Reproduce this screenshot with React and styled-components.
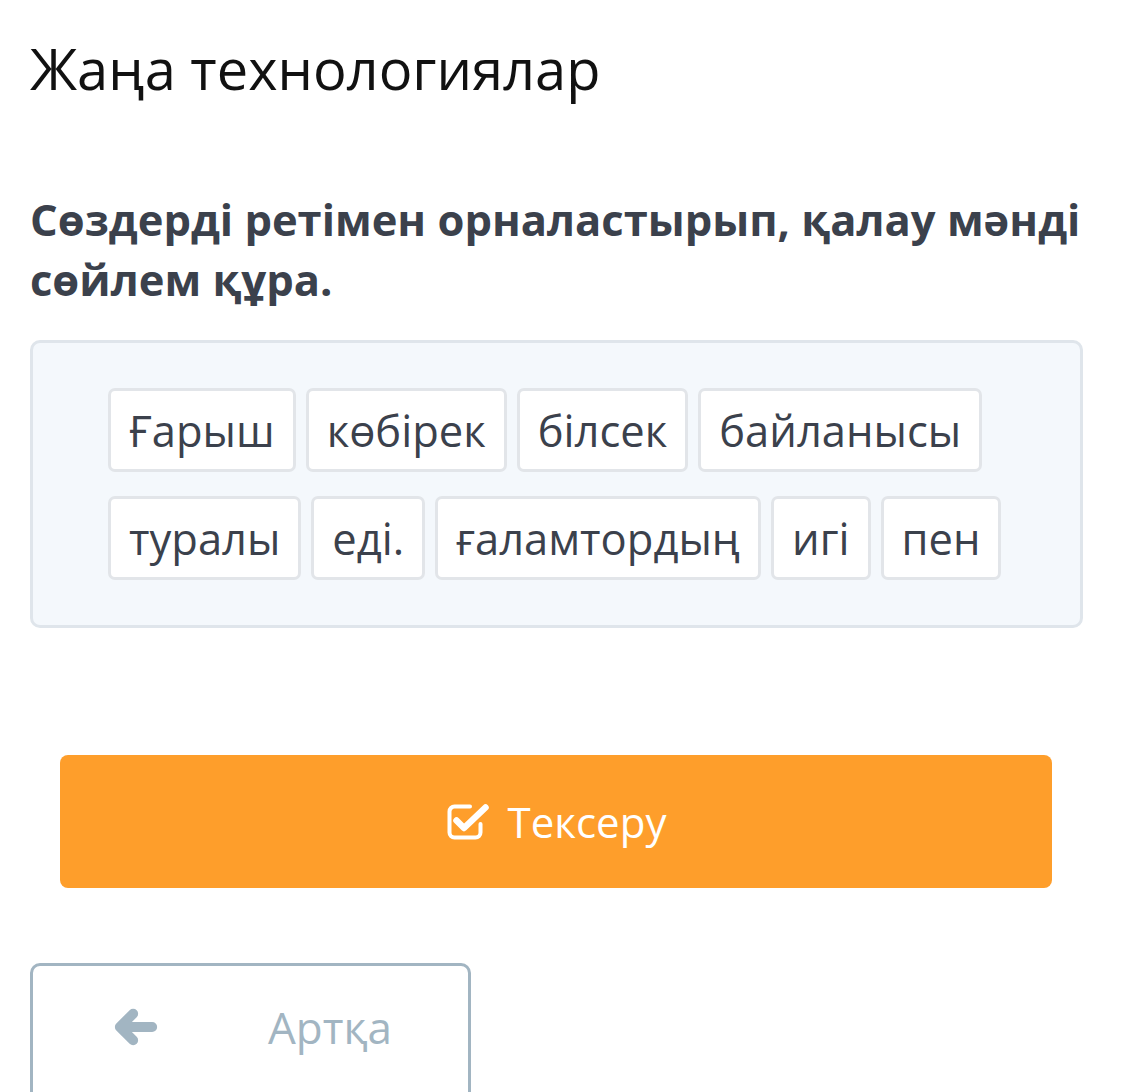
import styled, { createGlobalStyle } from 'styled-components';

const GlobalStyle = createGlobalStyle`
    body {
        margin: 0;
        background: #ffffff;
        font-family: "Open Sans", "Noto Sans", sans-serif;
    }
`;

const Page = styled.main`
    padding: 32px 42px 0 30px;
`;

const Title = styled.h1`
    margin: 0;
    font-size: 56px;
    font-weight: 400;
    line-height: 72px;
    color: #111111;
`;

const Task = styled.h2`
    margin: 86px 0 0;
    font-size: 43.5px;
    font-weight: 700;
    line-height: 60px;
    color: #3b414c;
`;

const Board = styled.section`
    margin-top: 30px;
    height: 288px;
    box-sizing: border-box;
    border: 3px solid #dfe5eb;
    border-radius: 10px;
    background: #f4f8fc;
    display: flex;
    padding: 45px 30px 0 75px;
`;

const Words = styled.div`
    flex: 1;
    display: flex;
    flex-wrap: wrap;
    align-content: flex-start;
    column-gap: 10px;
    row-gap: 24px;
`;

const Word = styled.span`
    box-sizing: border-box;
    height: 84px;
    padding: 0 18px;
    display: inline-flex;
    align-items: center;
    background: #ffffff;
    border: 3px solid #e2e5e9;
    border-radius: 7px;
    font-size: 43.5px;
    color: #3b414c;
`;

const CheckButton = styled.button`
    display: flex;
    align-items: center;
    justify-content: center;
    gap: 18px;
    width: 992px;
    height: 133px;
    margin: 127px 0 0 30px;
    border: none;
    border-radius: 8px;
    background: #fe9e2b;
    color: #ffffff;
    font-family: inherit;
    font-size: 42px;
    cursor: pointer;
`;

const BackButton = styled.button`
    display: flex;
    align-items: center;
    width: 441px;
    height: 140px;
    margin-top: 75px;
    padding: 0 0 12px 81px;
    box-sizing: border-box;
    border: 3px solid #a2b5c2;
    border-radius: 10px;
    background: #ffffff;
    color: #a2b5c2;
    font-family: inherit;
    font-size: 44px;
    cursor: pointer;

    svg {
        margin-right: 110px;
    }
`;

// open box with a check mark breaking out of its top-right corner
const CheckIcon = () => (
    <svg width="44" height="38" viewBox="0 0 44 38" fill="none" stroke="currentColor" strokeLinecap="round" strokeLinejoin="round">
        <path d="M24 3.5H8.5A5 5 0 0 0 3.5 8.5V29.5A5 5 0 0 0 8.5 34.5H29.5A5 5 0 0 0 34.5 29.5V21" strokeWidth="4" />
        <path d="M10.5 17.5L18 25L39.5 4.5" strokeWidth="6.5" />
    </svg>
);

const ArrowIcon = () => (
    <svg width="44" height="38" viewBox="0 0 46 40" fill="none" stroke="currentColor" strokeWidth="10.5" strokeLinecap="round" strokeLinejoin="round">
        <path d="M20 6L6 20L20 34M6 20H40" />
    </svg>
);

const words = [
    'Ғарыш', 'көбірек', 'білсек', 'байланысы',
    'туралы', 'еді.', 'ғаламтордың', 'игі', 'пен',
];

const App = () => {
    return (
        <>
            <GlobalStyle />
            <Page>
                <Title>Жаңа технологиялар</Title>
                <Task>Сөздерді ретімен орналастырып, қалау мәнді сөйлем құра.</Task>
                <Board>
                    <Words>
                        {words.map((w) => (
                            <Word key={w}>{w}</Word>
                        ))}
                    </Words>
                </Board>
                <CheckButton>
                    <CheckIcon />
                    Тексеру
                </CheckButton>
                <BackButton>
                    <ArrowIcon />
                    Артқа
                </BackButton>
            </Page>
        </>
    );
};

export default App;
